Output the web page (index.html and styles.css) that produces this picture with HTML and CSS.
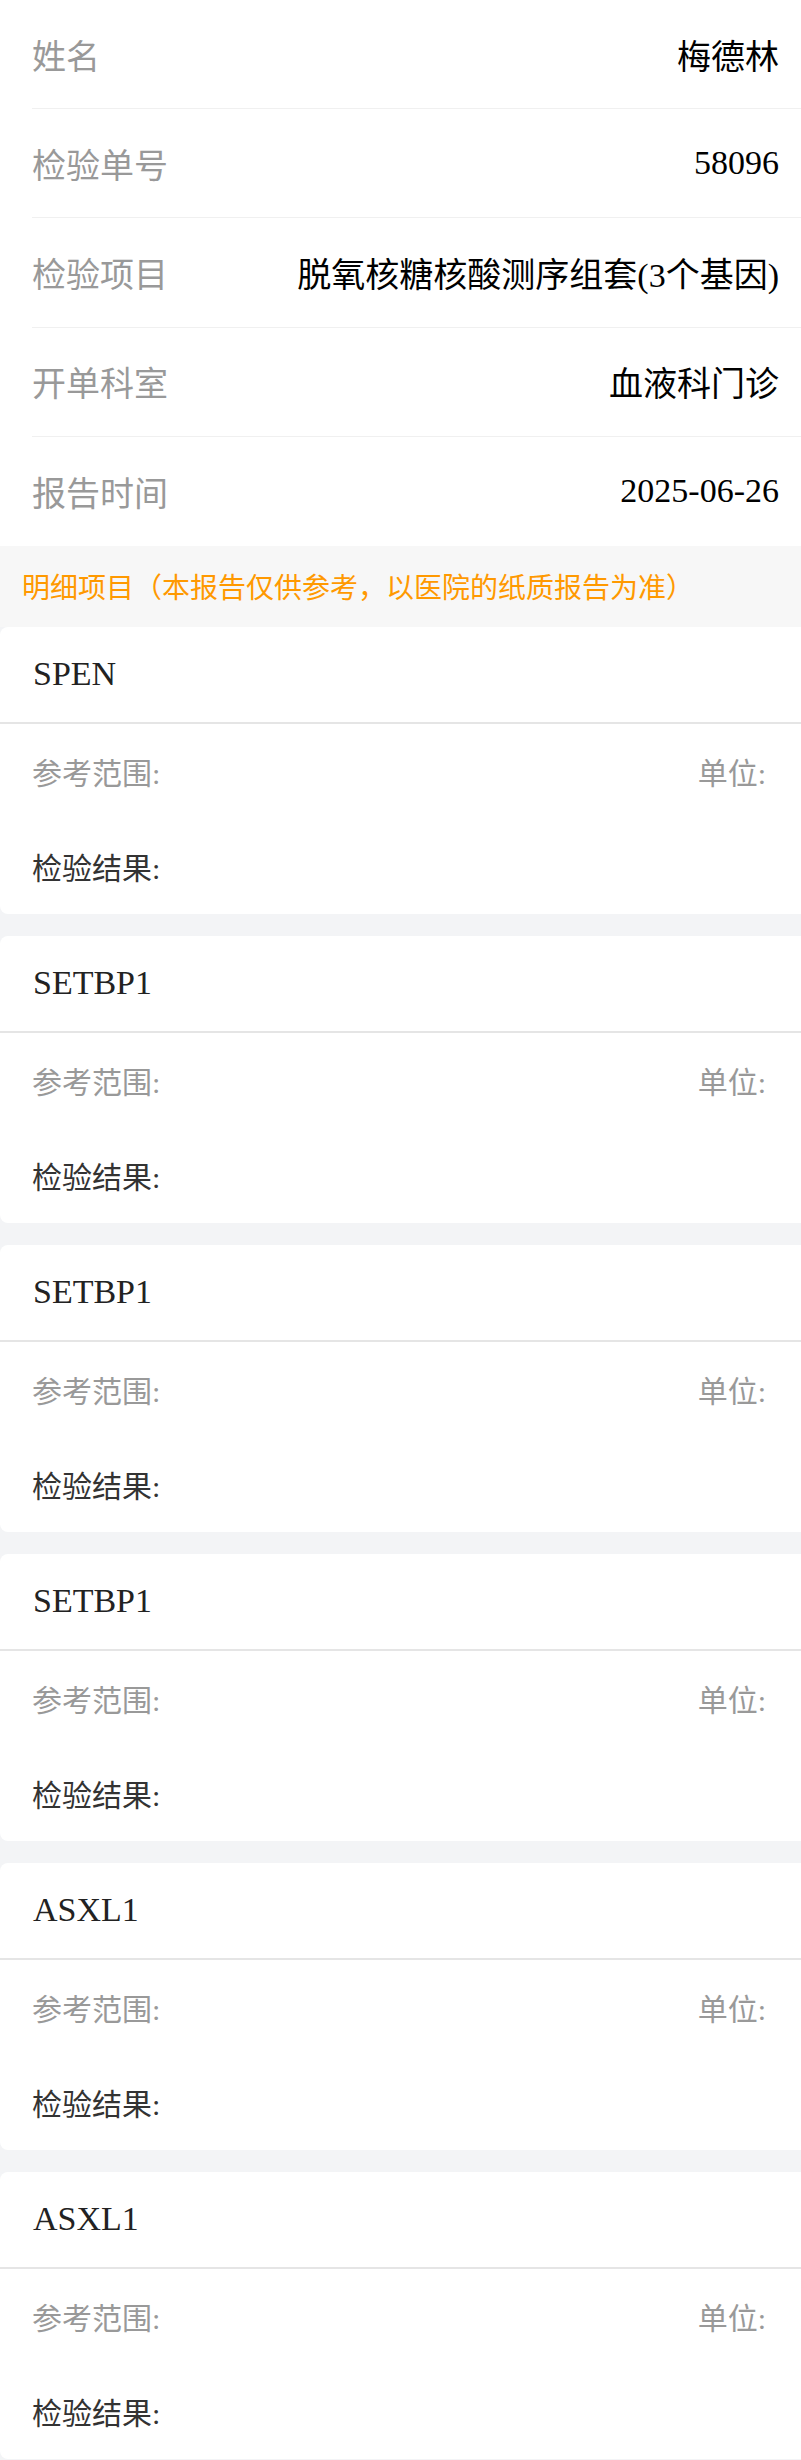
FILE: index.html
```html
<!DOCTYPE html>
<html lang="zh-CN">
<head>
<meta charset="utf-8">
<title>检验报告</title>
<link rel="stylesheet" href="styles.css">
</head>
<body>
<section class="info">
  <div class="info-row"><span class="info-label">姓名</span><span class="info-value">梅德林</span></div>
  <div class="info-row"><span class="info-label">检验单号</span><span class="info-value">58096</span></div>
  <div class="info-row"><span class="info-label">检验项目</span><span class="info-value">脱氧核糖核酸测序组套(3个基因)</span></div>
  <div class="info-row"><span class="info-label">开单科室</span><span class="info-value">血液科门诊</span></div>
  <div class="info-row"><span class="info-label">报告时间</span><span class="info-value">2025-06-26</span></div>
</section>
<div class="notice">明细项目（本报告仅供参考，以医院的纸质报告为准）</div>
<section class="list">
  <div class="card">
    <div class="card-head">SPEN</div>
    <div class="card-row"><span class="muted">参考范围:</span><span class="muted">单位:</span></div>
    <div class="card-row"><span class="result">检验结果:</span></div>
  </div>
  <div class="card">
    <div class="card-head">SETBP1</div>
    <div class="card-row"><span class="muted">参考范围:</span><span class="muted">单位:</span></div>
    <div class="card-row"><span class="result">检验结果:</span></div>
  </div>
  <div class="card">
    <div class="card-head">SETBP1</div>
    <div class="card-row"><span class="muted">参考范围:</span><span class="muted">单位:</span></div>
    <div class="card-row"><span class="result">检验结果:</span></div>
  </div>
  <div class="card">
    <div class="card-head">SETBP1</div>
    <div class="card-row"><span class="muted">参考范围:</span><span class="muted">单位:</span></div>
    <div class="card-row"><span class="result">检验结果:</span></div>
  </div>
  <div class="card">
    <div class="card-head">ASXL1</div>
    <div class="card-row"><span class="muted">参考范围:</span><span class="muted">单位:</span></div>
    <div class="card-row"><span class="result">检验结果:</span></div>
  </div>
  <div class="card">
    <div class="card-head">ASXL1</div>
    <div class="card-row"><span class="muted">参考范围:</span><span class="muted">单位:</span></div>
    <div class="card-row"><span class="result">检验结果:</span></div>
  </div>
</section>
</body>
</html>
```
FILE: styles.css
```css
* { box-sizing: border-box; }
html, body {
  margin: 0;
  padding: 0;
}
body {
  background: #f3f4f6;
  font-family: "Liberation Serif", "Noto Sans CJK SC", serif;
  overflow-x: hidden;
}
.info {
  background: #fff;
}
.info-row {
  height: 109.2px;
  margin-left: 32px;
  padding-right: 22px;
  display: flex;
  align-items: center;
  justify-content: space-between;
  border-bottom: 1px solid #f0f0f0;
}
.info-row:last-child {
  border-bottom: none;
}
.info-label {
  font-family: "Noto Sans CJK SC", sans-serif;
  font-size: 34px;
  color: #999;
}
.info-value {
  font-size: 34px;
  color: #000;
}
.notice {
  background: #f7f7f7;
  height: 81px;
  padding-left: 22px;
  display: flex;
  align-items: center;
  font-family: "Noto Sans CJK SC", sans-serif;
  font-size: 28px;
  color: #ff9900;
}
.list {
  display: flex;
  flex-direction: column;
  gap: 22px;
}
.card {
  background: #fff;
  border-radius: 8px 0 0 8px;
  height: 287px;
  display: flex;
  flex-direction: column;
}
.card-head {
  height: 97px;
  padding-left: 33px;
  display: flex;
  align-items: center;
  font-size: 34px;
  color: #222;
  border-bottom: 2px solid #e5e5e5;
}
.card-row {
  height: 95px;
  padding: 0 35px 0 32px;
  display: flex;
  align-items: center;
  justify-content: space-between;
  font-size: 30px;
}
.muted {
  color: #999;
}
.result {
  color: #333;
}
```
